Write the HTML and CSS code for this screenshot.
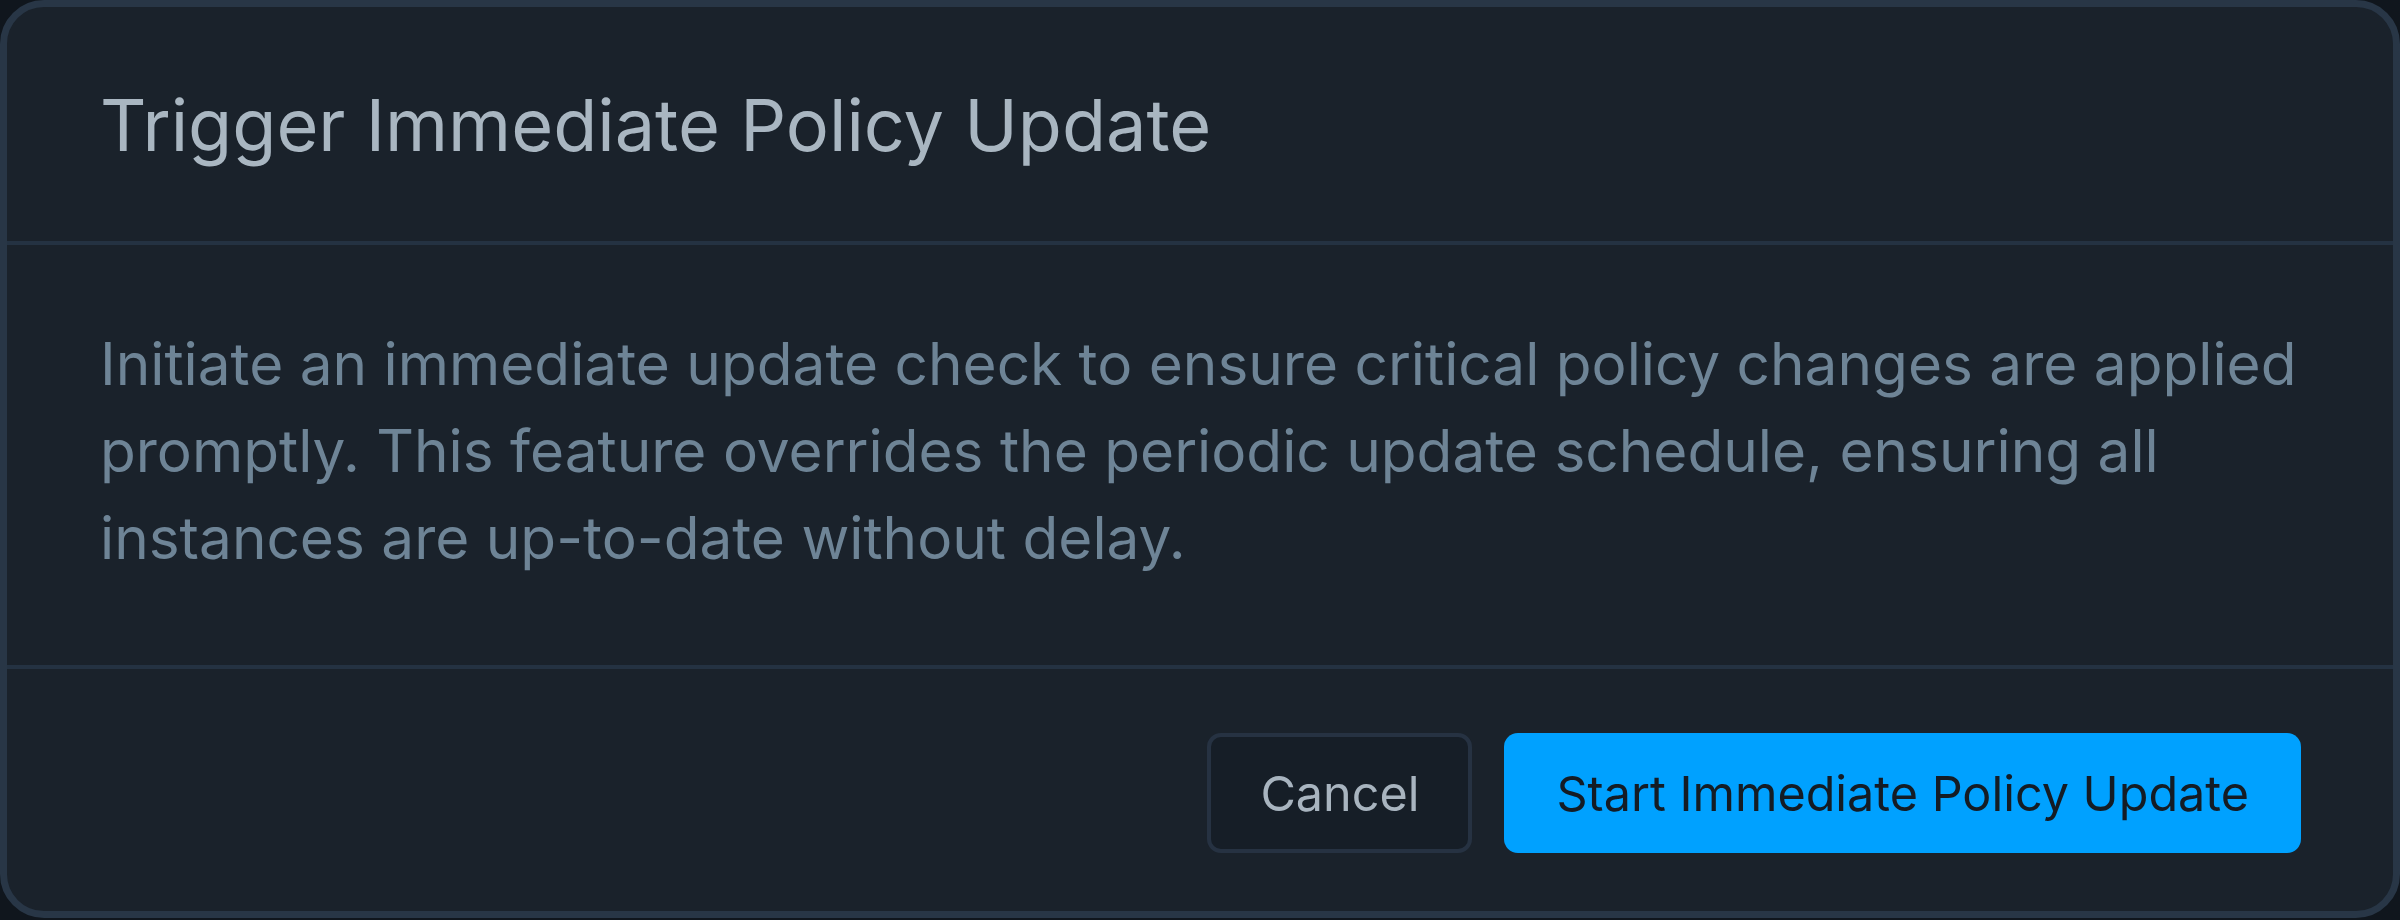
FILE: index.html
```html
<!doctype html>
<html lang="en">
<head>
    <meta charset="utf-8">
    <title>Trigger Immediate Policy Update</title>
    <link rel="stylesheet" href="styles.css">
</head>
<body>
    <div class="dialog" role="dialog" aria-labelledby="dialog-title">
        <div class="dialog-header">
            <h2 id="dialog-title" class="dialog-title">Trigger Immediate Policy Update</h2>
        </div>
        <div class="dialog-body">
            <p>Initiate an immediate update check to ensure critical policy changes are applied promptly. This feature overrides the periodic update schedule, ensuring all instances are up-to-date without delay.</p>
        </div>
        <div class="dialog-footer">
            <button class="btn btn-secondary" type="button">Cancel</button>
            <button class="btn btn-primary" type="button">Start Immediate Policy Update</button>
        </div>
    </div>
</body>
</html>
```

FILE: styles.css
```css
* {
    box-sizing: border-box;
}
html, body {
    margin: 0;
    height: 100%;
}
body {
    background-color: #10161d;
    font-family: Inter, "Noto Sans", sans-serif;
}
.dialog {
    display: flex;
    flex-direction: column;
    width: 2400px;
    height: 918px;
    background-color: #1a222b;
    border: 7px solid #283646;
    border-radius: 44px;
    overflow: hidden;
}
.dialog-header {
    display: flex;
    align-items: center;
    height: 238px;
    padding: 0 92px 0 93px;
    border-bottom: 4px solid #243242;
}
.dialog-title {
    margin: 0;
    font-size: 72px;
    font-weight: 400;
    color: #a9b6c1;
}
.dialog-body {
    padding: 75px 92px 84px 93px;
    border-bottom: 4px solid #243242;
}
.dialog-body p {
    margin: 0;
    font-size: 58.5px;
    line-height: 87px;
    color: #6e8496;
}
.dialog-footer {
    flex: 1;
    display: flex;
    align-items: center;
    justify-content: flex-end;
    gap: 32px;
    padding: 6px 92px 0;
}
.btn {
    height: 120px;
    padding: 0 49px;
    font-family: inherit;
    font-size: 48.5px;
    font-weight: 400;
    border-radius: 14px;
    cursor: pointer;
}
.btn-secondary {
    background-color: #161e27;
    border: 4px solid #263242;
    color: #a8b4bf;
}
.btn-primary {
    background-color: #00a1ff;
    border: none;
    padding: 0 52px;
    color: #141c25;
}
```
